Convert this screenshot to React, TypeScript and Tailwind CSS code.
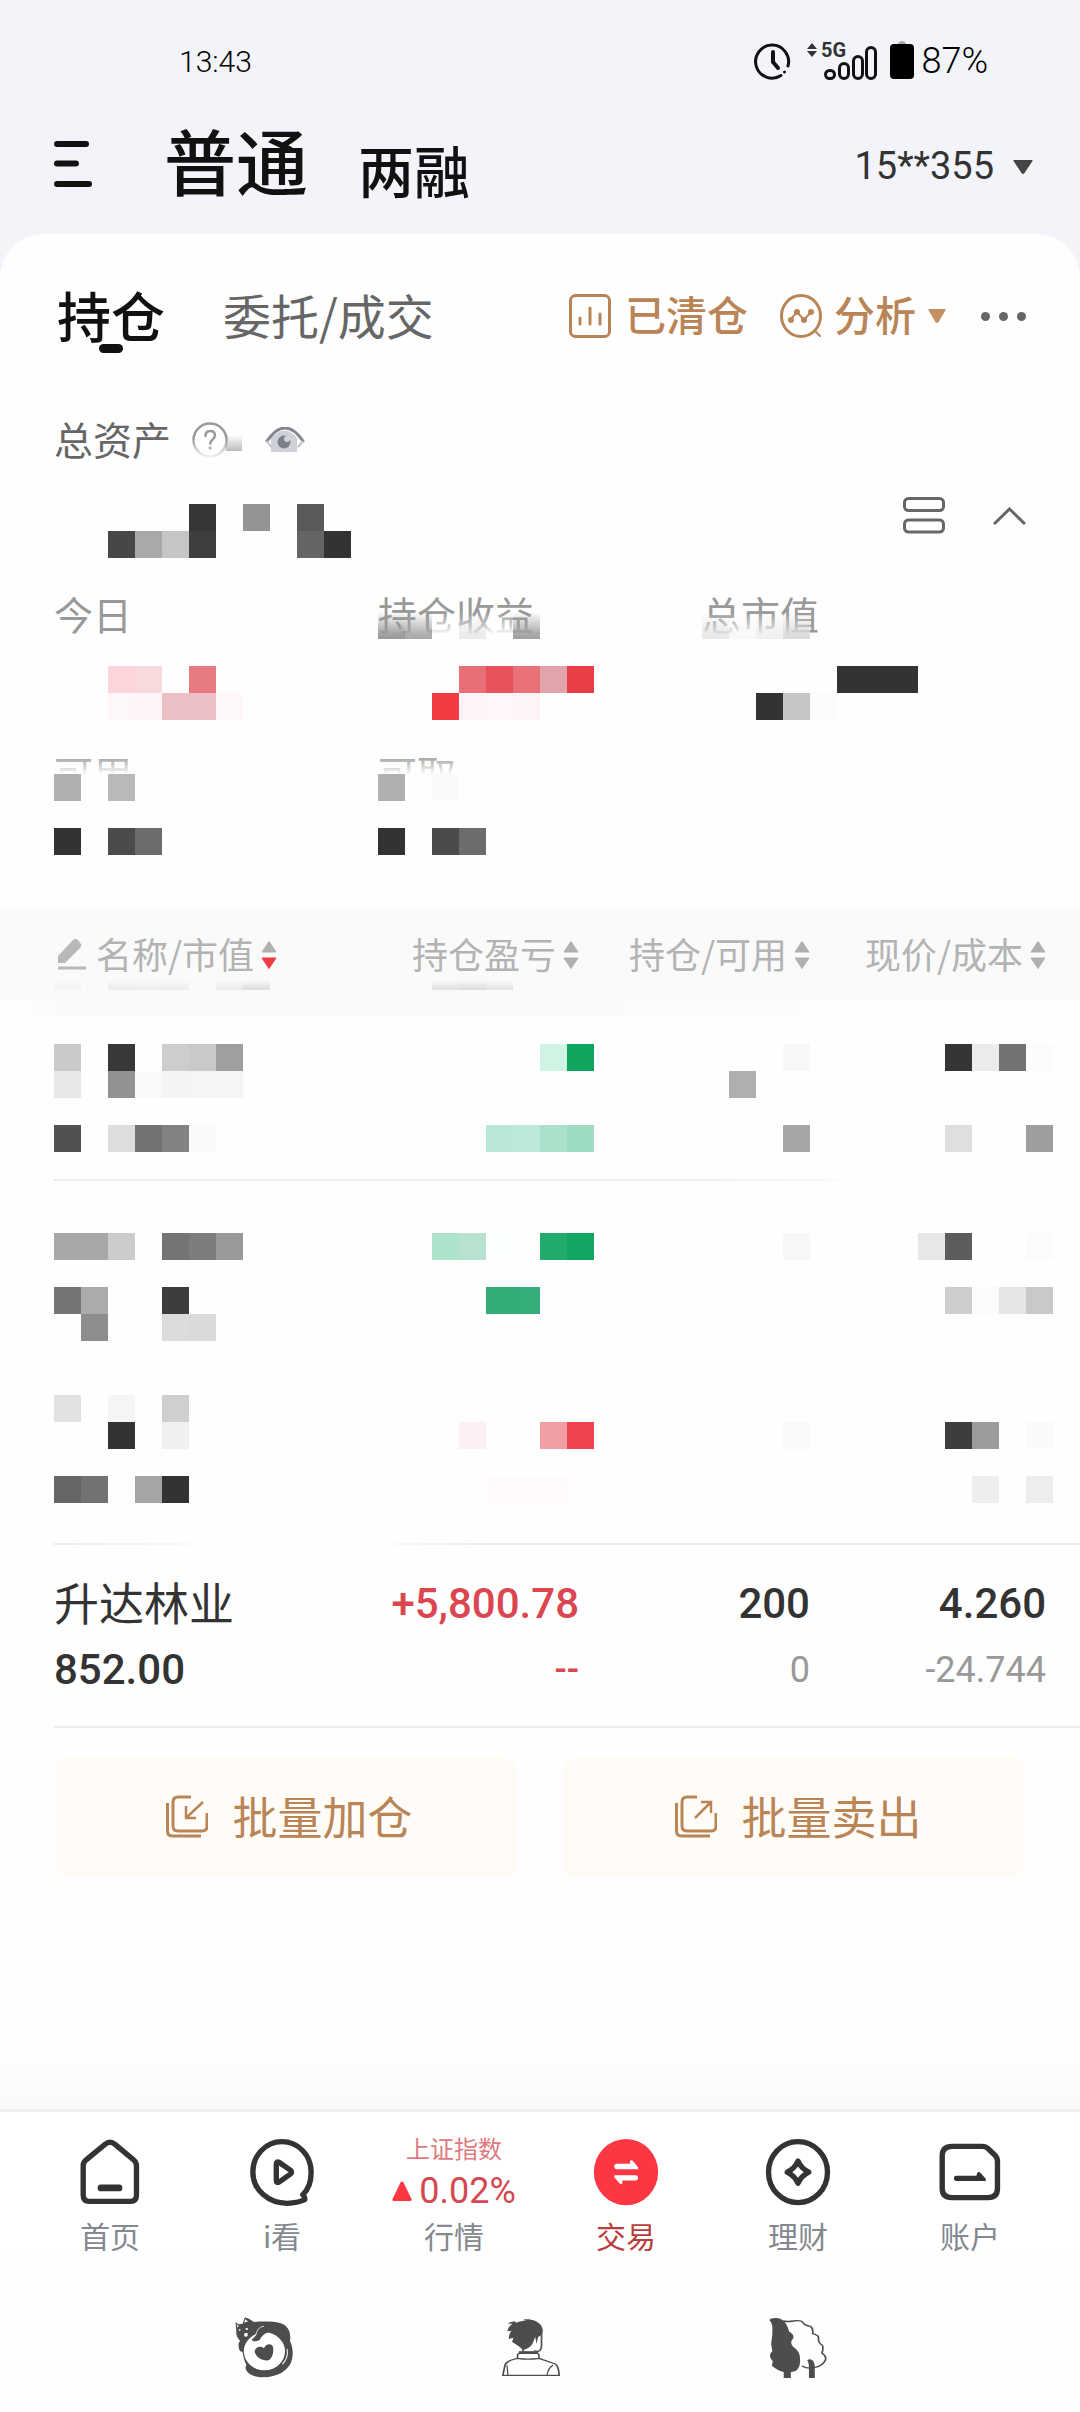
import type { ReactNode } from "react";

const CELL = 27;

type MosaicProps = { rows: string[]; cols: number; className?: string };

// Privacy mosaic: every row is a list of hex colours, "-" leaves a cell empty
function Mosaic({ rows, cols, className = "" }: MosaicProps) {
  const width = cols * CELL;
  const height = rows.length * CELL;

  return (
    <svg
      width={width}
      height={height}
      viewBox={`0 0 ${width} ${height}`}
      shapeRendering="crispEdges"
      aria-hidden="true"
      className={`block shrink-0 ${className}`}
    >
      {rows.map((row, y) =>
        row.split(" ").map((color, x) =>
          color === "-" || color === "" ? null : (
            <rect key={`${x}-${y}`} x={x * CELL} y={y * CELL} width={CELL} height={CELL} fill={`#${color}`} />
          )
        )
      )}
    </svg>
  );
}

type SmudgeProps = { id: string; colors: string; height: number; className?: string };

// Strip of mosaic that fades in from the top
function Smudge({ id, colors, height, className = "" }: SmudgeProps) {
  const list = colors.split(" ");
  const width = list.length * CELL;

  return (
    <svg width={width} height={height} viewBox={`0 0 ${width} ${height}`} aria-hidden="true" className={`absolute ${className}`}>
      <defs>
        <linearGradient id={id} x1="0" y1="0" x2="0" y2="1">
          <stop offset="0" stopColor="#fff" stopOpacity="0" />
          <stop offset="0.8" stopColor="#fff" stopOpacity="0.9" />
          <stop offset="1" stopColor="#fff" />
        </linearGradient>
        <mask id={`${id}-mask`}>
          <rect width={width} height={height} fill={`url(#${id})`} />
        </mask>
      </defs>
      <g mask={`url(#${id}-mask)`}>
        {list.map((color, x) => (
          <rect key={x} x={x * CELL} width={CELL} height={height} fill={color === "-" ? "#ffffff" : `#${color}`} />
        ))}
      </g>
    </svg>
  );
}

function SortIcon({ active = false }: { active?: boolean }) {
  return (
    <svg width="16" height="30" viewBox="0 0 16 30" aria-hidden="true">
      <path d="M8 1.5 15 12H1z" fill="#b0b0b0" stroke="#b0b0b0" strokeLinejoin="round" />
      <path d="M8 28.5 15 18H1z" fill={active ? "#ee3b45" : "#b0b0b0"} stroke={active ? "#ee3b45" : "#b0b0b0"} strokeLinejoin="round" />
    </svg>
  );
}

function StatusBar() {
  return (
    <div className="flex h-[100px] items-center justify-between pt-[22px] pr-[92px] pl-[179px] font-[Roboto] font-light text-black">
      <span className="text-[30px]">13:43</span>

      <div className="flex items-center">
        <svg width="160" height="40" viewBox="0 0 160 40" fill="none" aria-hidden="true" className="overflow-visible">
          <path d="M27 34.5A16.5 16.5 0 1 1 34 25" stroke="#111" strokeWidth="3" strokeLinecap="round" />
          <circle cx="30.500" cy="31" r="1.500" fill="#111" />
          <path d="M19 11v10l5 6" stroke="#111" strokeWidth="4" strokeLinecap="round" strokeLinejoin="round" />
          <path d="M58 2l5 6H53zM58 16l5-6H53z" fill="#333" />
          <text x="67" y="16" fontSize="20" fontWeight="700" fontFamily="Roboto, sans-serif" fill="#333">
            5G
          </text>
          <g stroke="#111" strokeWidth="3">
            <rect x="71.500" y="29.500" width="9" height="8" rx="4" />
            <rect x="85.500" y="22.500" width="9" height="15" rx="4.500" />
            <rect x="99.500" y="15.500" width="9" height="22" rx="4.500" />
            <rect x="112.500" y="6.500" width="9" height="31" rx="4.500" />
          </g>
          <path d="M144 4q0-4 4-4t4 4z" fill="#aaa" />
          <rect x="136" y="3" width="24" height="35" rx="4" fill="#000" />
        </svg>
        <span className="ml-[7px] text-[36px]">87%</span>
      </div>
    </div>
  );
}

function TitleBar() {
  return (
    <div className="flex h-[128px] items-center pr-[47px] pl-[54px] text-[#111]">
      <button type="button" aria-label="菜单">
        <svg width="40" height="46" viewBox="0 0 40 46" fill="none" stroke="#111" strokeWidth="6" strokeLinecap="round" aria-hidden="true">
          <path d="M3 3h29M3 22.500h19M3 43h32" />
        </svg>
      </button>

      <nav className="ml-[70px] flex items-end gap-[50px] pb-[10px] font-medium">
        <button type="button" className="text-[72px] leading-[72px]">
          普通
        </button>
        <button type="button" className="text-[56px] leading-[52px]">
          两融
        </button>
      </nav>

      <button type="button" className="ml-auto flex items-center gap-[19px] pt-[5px] font-[Roboto] text-[38px] text-[#333]">
        15**355
        <svg width="20" height="14" viewBox="0 0 20 14" fill="#444" aria-hidden="true">
          <path d="M1 0h18q1 0 .5 1l-8 12q-1.500 2-3 0L.5 1Q0 0 1 0z" />
        </svg>
      </button>
    </div>
  );
}

function PositionTabs() {
  return (
    <div className="flex h-[92px] items-center pr-[54px] pl-[57px]">
      <button type="button" className="relative pb-1 text-[54px] font-medium text-[#111]">
        持仓
        <span className="absolute bottom-[6px] left-1/2 h-[9px] w-6 -translate-x-1/2 rounded-full bg-[#111]" />
      </button>
      <button type="button" className="ml-[58px] pb-1 text-[48px] text-[#666]">
        委托/成交
      </button>

      <div className="ml-auto flex items-center text-[41px] font-medium text-[#b98556]">
        <button type="button" className="flex items-center gap-[14px]">
          <svg width="42" height="44" viewBox="0 0 42 44" fill="none" stroke="currentColor" strokeWidth="3" strokeLinecap="round" aria-hidden="true">
            <rect x="1.500" y="1.500" width="39" height="41" rx="5" />
            <path d="M11 24v6M21 14v16M31 20v10" />
          </svg>
          <span className="pb-1">已清仓</span>
        </button>
        <button type="button" className="ml-[32px] flex items-center gap-[12px]">
          <svg width="42" height="44" viewBox="0 0 42 44" fill="none" stroke="currentColor" strokeWidth="3" strokeLinecap="round" aria-hidden="true">
            <ellipse cx="21" cy="22" rx="19.500" ry="20.500" />
            <path d="M35 37l5 5M10 26l7-8 7 8 7-8" strokeWidth="2" />
            <g fill="currentColor" stroke="none">
              <circle cx="11" cy="26" r="3" />
              <circle cx="17" cy="18" r="3" />
              <circle cx="24" cy="26" r="3" />
              <circle cx="31" cy="18" r="3" />
            </g>
          </svg>
          <span className="pb-1">分析</span>
          <svg width="18" height="14" viewBox="0 0 18 14" fill="#c69060" aria-hidden="true">
            <path d="M1 0h16q1 0 .6 1l-7 12q-1.600 2-3.200 0l-7-12Q0 0 1 0z" />
          </svg>
        </button>
        <button type="button" aria-label="更多" className="ml-[35px] flex gap-[9px]">
          <span className="size-[9px] rounded-full bg-[#666]" />
          <span className="size-[9px] rounded-full bg-[#666]" />
          <span className="size-[9px] rounded-full bg-[#666]" />
        </button>
      </div>
    </div>
  );
}

function AssetTotal() {
  return (
    <section className="px-[54px]">
      <div className="flex h-[44px] items-center">
        <h2 className="pb-1 text-[39px] text-[#666]">总资产</h2>
        <button type="button" aria-label="说明" className="ml-[21px]">
          <svg width="52" height="38" viewBox="0 0 52 38" fill="none" aria-hidden="true">
            <defs>
              <linearGradient id="help-fade" x1="0" y1="0" x2="0" y2="1">
                <stop offset="0" stopColor="#bbb" stopOpacity="0" />
                <stop offset="1" stopColor="#bbb" />
              </linearGradient>
              <linearGradient id="help-ring" x1="0" y1="0" x2="0" y2="1">
                <stop offset="0.4" stopColor="#999" />
                <stop offset="1" stopColor="#999" stopOpacity="0.15" />
              </linearGradient>
            </defs>
            <rect x="34" y="14" width="16" height="16" fill="url(#help-fade)" />
            <circle cx="18" cy="19" r="16.500" fill="#fff" stroke="url(#help-ring)" strokeWidth="2.500" />
            <path d="M13.500 15q0-5 4.700-5t4.700 4.600c0 4-4.700 4-4.700 8" stroke="#999" strokeWidth="2.500" strokeLinecap="round" />
            <circle cx="18.200" cy="27" r="1.800" fill="#bbb" />
          </svg>
        </button>
        <button type="button" aria-label="隐藏金额" className="ml-[21px]">
          <svg width="40" height="26" viewBox="0 0 40 26" fill="none" aria-hidden="true">
            <path d="M6 11Q20-4 32 11v14H6z" fill="#cfd1d6" />
            <path d="M2 14Q20-12 38 14" stroke="#85878f" strokeWidth="3" strokeLinecap="round" />
            <path d="M2 14l4 6M38 14l-5 6" stroke="#c3c5ca" strokeWidth="2" />
            <circle cx="19" cy="15" r="6.500" fill="#7d808a" />
            <circle cx="22" cy="12" r="3" fill="#d3d5da" />
          </svg>
        </button>
      </div>

      <div className="mt-[35px] flex h-[61px] items-start">
        <Mosaic
          cols={11}
          rows={[
            "- - - - - 363636 - 949494 - 5a5a5a",
            "- - 474747 a9a9a9 c5c5c5 3e3e3e - - - 656565 333333",
          ]}
          className="self-end"
        />
        <div className="ml-auto flex items-center gap-[48px]">
          <button type="button" aria-label="切换视图">
            <svg width="42" height="37" viewBox="0 0 42 37" fill="none" stroke="#666" strokeWidth="3" aria-hidden="true">
              <rect x="1.500" y="1.500" width="39" height="12" rx="4" />
              <rect x="1.500" y="23" width="39" height="12" rx="4" />
            </svg>
          </button>
          <button type="button" aria-label="收起">
            <svg width="33" height="18" viewBox="0 0 33 18" fill="none" stroke="#666" strokeWidth="3" aria-hidden="true">
              <path d="M1 17 16.500 2 32 17" />
            </svg>
          </button>
        </div>
      </div>
    </section>
  );
}

const assetStats = [
  {
    label: "今日",
    smudge: "",
    rows: ["- - fbd5da f9dadc - e87b82", "- - fef7f7 fef4f5 ebbfc3 ebbfc3 fef8f8"],
  },
  {
    label: "持仓收益",
    smudge: "999999 a8a8a8 - eaeaea - a2a2a2",
    rows: ["- - - e86f75 e8525a e87178 e0a4aa eb3d45", "- - f23a42 fff4f5 fff7f7 fff4f5"],
  },
  {
    label: "总市值",
    smudge: "e8e8e8 f8f8f8 efefef dadada",
    rows: ["- - - - - 333333 333333 333333", "- - 333333 c6c6c6 fcfcfc"],
  },
];

const cashStats = [
  { label: "可用", rows: ["b0b0b0 - b9b9b9", "-", "333333 - 4b4b4b 6c6c6c"] },
  { label: "可取", rows: ["b0b0b0 - fafafa", "-", "333333 - 4b4b4b 6c6c6c"] },
];

function AssetStats() {
  return (
    <section className="px-[54px] pt-[34px] pb-[54px] text-[39px] leading-[43px] text-[#999]">
      <dl className="grid grid-cols-3">
        {assetStats.map((item, i) => (
          <div key={item.label}>
            <dt className="relative pb-1">
              {item.label}
              {item.smudge && <Smudge id={`stat-${i}`} colors={item.smudge} height={27} className="bottom-0 left-0" />}
            </dt>
            <dd className="mt-[27px]">
              <Mosaic cols={9} rows={item.rows} />
            </dd>
          </div>
        ))}
      </dl>

      <dl className="mt-[31px] grid grid-cols-3">
        {cashStats.map((item) => (
          <div key={item.label}>
            <dt className="relative h-[23px]">
              {item.label}
              <span className="absolute inset-x-0 top-0 h-[46px] bg-[linear-gradient(to_bottom,transparent_4px,#fefefe_24px)]" />
            </dt>
            <dd className="relative">
              <Mosaic cols={4} rows={item.rows} />
            </dd>
          </div>
        ))}
      </dl>
    </section>
  );
}

type MaskedRow = { id: string; rowClass: string; name: string[]; profit: string[]; amount: string[]; price: string[] };

const maskedRows: MaskedRow[] = [
  {
    id: "a",
    rowClass: "h-[182px] bg-[linear-gradient(to_right,#ececec_60%,transparent_80%)] bg-[length:100%_2px] bg-bottom bg-no-repeat [&>td]:pt-[45px]",
    name: [
      "cacaca - 383838 - cdcdcd c9c9c9 9f9f9f",
      "e8e8e8 - 929292 fafafa f4f4f4 f5f5f5 f5f5f5",
      "-",
      "515151 - dedede 737373 828282 fafafa",
    ],
    profit: ["- - - - - - - cff4e3 0fa55f", "-", "-", "- - - - - b8e8d5 bceada abe1ca 9ddcc1"],
    amount: ["- - - - - - - f8f8f8", "- - - - - afafaf", "-", "- - - - - - - a6a6a6"],
    price: ["- - - - - 343434 ebebeb 737373 fbfbfb", "-", "-", "- - - - - dfdfdf - - 9e9e9e"],
  },
  {
    id: "b",
    rowClass: "h-[182px] [&>td]:pt-[52px]",
    name: [
      "a8a8a8 a8a8a8 cccccc - 747474 7d7d7d 999999",
      "-",
      "757575 ababab - - 3d3d3d",
      "- 8d8d8d - - dcdcdc dadada",
    ],
    profit: ["- - - ade3cb b8e2d0 fafffd - 22ab6c 13a662", "-", "- - - - - 31ad76 33ae78", "-"],
    amount: ["- - - - - - - f7f7f7", "-", "-", "-"],
    price: ["- - - - e7e7e7 5c5c5c - - fbfbfb", "-", "- - - - - cdcdcd fbfbfb e5e5e5 c9c9c9", "-"],
  },
  {
    id: "c",
    rowClass:
      "h-[182px] bg-[linear-gradient(to_right,#ececec,transparent_18%,transparent_30%,#ececec_42%)] bg-[length:100%_2px] bg-bottom bg-no-repeat [&>td]:pt-[32px]",
    name: ["e2e2e2 - f5f5f5 - cfcfcf", "- - 333333 - f0f0f0", "-", "666666 727272 - a5a5a5 333333"],
    profit: ["-", "- - - - fdf0f2 - - f19fa5 ef444d", "-", "- - - - - fffbfb fffbfb fffbfb fffdfd"],
    amount: ["-", "- - - - - - - f9f9f9", "-", "-"],
    price: ["-", "- - - - - 3d3d3d 9c9c9c - fafafa", "-", "- - - - - - eeeeee - ededed"],
  },
];

function HeadCell({ children, active, className = "" }: { children: ReactNode; active?: boolean; className?: string }) {
  return (
    <th className={`p-0 pb-[3px] font-normal ${className}`}>
      <button type="button" className="inline-flex items-center gap-[7px] align-middle">
        {children}
        <SortIcon active={active} />
      </button>
    </th>
  );
}

function Holdings() {
  return (
    <div className="relative bg-[linear-gradient(#fafafa,#fafafa)] bg-[length:100%_90px] bg-no-repeat pl-[54px]">
      <table className="w-full table-fixed border-collapse text-right">
        <colgroup>
          <col />
          <col className="w-[243px]" />
          <col className="w-[216px]" />
          <col className="w-[270px]" />
        </colgroup>
        <thead className="text-[36px] leading-[44px] text-[#b3b3b3]">
          <tr className="h-[90px]">
            <HeadCell active className="text-left">
              <svg width="35" height="34" viewBox="0 0 35 34" aria-hidden="true">
                <path d="M4 25V18L19 2q3-2 5 0l3 4q1 2-1 4L11 25z" fill="#b8b8b8" />
                <path d="M4 30h28" stroke="#b8b8b8" strokeWidth="3" />
              </svg>
              <span className="pb-[3px]">名称/市值</span>
            </HeadCell>
            <HeadCell className="pr-[15px]">
              <span className="pb-[3px]">持仓盈亏</span>
            </HeadCell>
            <HeadCell>
              <span className="pb-[3px]">持仓/可用</span>
            </HeadCell>
            <HeadCell className="pr-[34px]">
              <span className="pb-[3px]">现价/成本</span>
            </HeadCell>
          </tr>
        </thead>
        <tbody>
          {maskedRows.map((row) => (
            <tr key={row.id} className={`align-top ${row.rowClass}`}>
              <td>
                <Mosaic cols={8} rows={row.name} />
              </td>
              <td>
                <Mosaic cols={9} rows={row.profit} />
              </td>
              <td>
                <Mosaic cols={8} rows={row.amount} />
              </td>
              <td>
                <Mosaic cols={9} rows={row.price} />
              </td>
            </tr>
          ))}
          <tr className="h-[182px] border-b-2 border-[#ececec] align-top font-[Roboto] text-[42px] leading-[66px] text-[#333] [&>td]:pt-[26px]">
            <td className="text-left">
              <p className="font-['Noto_Sans_CJK_SC'] text-[45px] leading-[62px]">升达林业</p>
              <p className="pt-1 font-medium">852.00</p>
            </td>
            <td className="pr-[15px] font-medium text-[#dc4650]">
              <p>+5,800.78</p>
              <p className="text-[36px]">--</p>
            </td>
            <td>
              <p className="font-medium">200</p>
              <p className="text-[36px] text-[#999]">0</p>
            </td>
            <td className="pr-[34px]">
              <p className="font-medium">4.260</p>
              <p className="text-[36px] text-[#999]">-24.744</p>
            </td>
          </tr>
        </tbody>
      </table>
      <div className="absolute top-[90px] left-[24px] h-[17px] w-[860px] bg-[linear-gradient(to_right,transparent,#fafafa_5%,#fafafa_60%,transparent)]" />
      <Smudge id="head-name" colors="f3f3f3 fafafa ececec eeeeee ececec fafafa ebebeb dddddd" height={10} className="top-[71px] left-[54px]" />
      <Smudge id="head-profit" colors="e2e2e2 dddddd e3e3e3" height={10} className="top-[71px] left-[432px]" />
    </div>
  );
}

function BatchActions() {
  return (
    <div className="grid grid-cols-2 gap-[46px] px-[54px] pt-[29px] text-[45px] text-[#b98556]">
      <button type="button" className="flex h-[120px] items-center justify-center gap-[24px] rounded-xl bg-[#fffcf8]">
        <svg width="50" height="44" viewBox="-2 0 50 44" fill="none" stroke="currentColor" strokeWidth="3" aria-hidden="true">
          <path d="M31 2H18q-5 0-5 5v24q0 5 5 5h24q5 0 5-5V18" />
          <path d="M7.500 8v28q0 5 5 5H41" />
          <path d="M43 7 26 23M26 11v12h10" strokeWidth="2.500" />
        </svg>
        <span className="pb-[3px]">批量加仓</span>
      </button>
      <button type="button" className="flex h-[120px] items-center justify-center gap-[24px] rounded-xl bg-[#fffcf8]">
        <svg width="50" height="44" viewBox="-2 0 50 44" fill="none" stroke="currentColor" strokeWidth="3" aria-hidden="true">
          <path d="M28 2H18q-5 0-5 5v24q0 5 5 5h24q5 0 5-5V18" />
          <path d="M7.500 8v28q0 5 5 5H41" />
          <path d="M26 23 42 7M32 7h10v11" strokeWidth="2.500" />
        </svg>
        <span className="pb-[3px]">批量卖出</span>
      </button>
    </div>
  );
}

function TabItem({ label, active, children }: { label: string; active?: boolean; children: ReactNode }) {
  return (
    <a href="#" className="flex flex-col items-center">
      <div className="flex h-[81px] flex-col items-center">{children}</div>
      <span className={`text-[30px] leading-[36px] ${active ? "text-[#b8403c]" : "text-[#84888f]"}`}>{label}</span>
    </a>
  );
}

function BottomTabs() {
  return (
    <nav className="grid grid-cols-6 border-t-[3px] border-[#f0f0f0] bg-white px-[24px] pt-[24px]">
      <TabItem label="首页">
        <svg width="68" height="67" viewBox="221 147 198 200" fill="none" stroke="#333" strokeWidth="16" strokeLinecap="round" aria-hidden="true" className="mt-[3px]">
          <path d="M240 227v88q0 18 18 18h123q18 0 18-18v-88q0-10-8-17l-56-47q-15-12-30 0l-57 47q-8 7-8 17z" />
          <path d="M293 293h54" strokeWidth="20" />
        </svg>
      </TabItem>
      <TabItem label="i看">
        <svg width="68" height="67" viewBox="720 147 198 200" fill="none" stroke="#333" strokeWidth="16" strokeLinejoin="round" aria-hidden="true" className="mt-[3px]">
          <path d="M881 313C898 297 906 272 906 246C906 195 867 155 819 155C771 155 732 195 732 246C732 300 780 339 835 339Q865 338 887 328Q888 320 881 313Z" />
          <path d="M802 222q0-10 9-5l33 23q7 6 0 12l-33 23q-9 5-9-5z" />
        </svg>
      </TabItem>
      <TabItem label="行情">
        <span className="text-[24px] leading-[24px] text-[#de7a80]">上证指数</span>
        <span className="mt-[3px] flex items-center gap-[7px] font-[Roboto] text-[36px] leading-[56px] text-[#d54850]">
          <svg width="20" height="20" viewBox="0 0 20 20" fill="#fb3744" aria-hidden="true">
            <path d="M8.500 1.500q1.500-2 3 0l8 16.500q.5 2-1.500 2H2q-2 0-1.500-2z" />
          </svg>
          0.02%
        </span>
      </TabItem>
      <TabItem label="交易" active>
        <svg width="68" height="67" viewBox="151 147 198 200" aria-hidden="true" className="mt-[3px]">
          <ellipse cx="250" cy="246" rx="96" ry="99" fill="#fb3744" />
          <path id="trade-arrow" d="M223 221h39v-8q4-5 8-1l16 19v6h-63q-8 0-8-8t8-8z" fill="#fff" />
          <use href="#trade-arrow" transform="rotate(180 250.500 246)" />
        </svg>
      </TabItem>
      <TabItem label="理财">
        <svg width="68" height="67" viewBox="650 147 198 200" fill="none" stroke="#333" strokeWidth="16" strokeLinejoin="round" aria-hidden="true" className="mt-[3px]">
          <ellipse cx="749" cy="246" rx="88" ry="91" />
          <path d="M749 213Q758 235 781 246Q758 258 749 279Q740 258 717 246Q740 235 749 213Z" />
        </svg>
      </TabItem>
      <TabItem label="账户">
        <svg width="68" height="67" viewBox="1150 147 198 200" aria-hidden="true" className="mt-[3px]">
          <path
            d="M1196 169h89q10 0 16 5l21 20q9 8 9 20v80q0 28-28 28h-108q-29 0-29-28v-96q0-29 30-29z"
            fill="none"
            stroke="#333"
            strokeWidth="16"
          />
          <path d="M1209 257h59l3-9q4-5 9 0l16 18v6h-87q-8 0-8-8t8-7z" fill="#333" />
        </svg>
      </TabItem>
    </nav>
  );
}

function SystemNav() {
  return (
    <div className="grid grid-cols-3 justify-items-center pt-[64px] pr-[148px] pb-[34px] pl-[130px]">
      <button type="button" aria-label="最近任务">
        <svg width="58" height="61" viewBox="83 77 138 183" preserveAspectRatio="none" fill="#4d4d4d" aria-hidden="true">
          <path d="M84 93l8 6 9-2 5-18q2-2 11 4l11 9c22-2 47-2 62 3 22 8 26 30 24 55 8 20 8 45 2 65-11 25-31 42-66 43-25-1-42-13-42-30l2-8c-4-10-8-25-9-38-7 0-11-12-9-27l3-7c-7-8-10-18-9-33z" />
          <ellipse cx="153" cy="180" rx="49" ry="57" fill="#fff" />
          <path d="M150 106c-10 4-15 24-27 39 2 8 12 5 19 0 4-10 10-18 20-22l6-17z" />
          <path d="M152 105c-12 1-17 13-19 24-3 9-8 11-11 14" fill="none" stroke="#fff" strokeWidth="2" />
          <path d="M207 173q4 24-11 46" fill="none" stroke="#fff" strokeWidth="2.500" />
          <path d="M152 171c4-16 20-16 22-2 1 18-3 31-11 38-15 2-28-7-33-24-1-15 14-22 22-12z" />
          <g fill="#fff">
            <circle cx="94" cy="116" r="2.500" />
            <circle cx="111" cy="113" r="3" />
            <path d="M87 99l5 4-3 6zM107 84l7 6-9 4zM105 126l8-1v9q-6 5-8-1z" />
          </g>
        </svg>
      </button>
      <button type="button" aria-label="主页">
        <svg width="58" height="61" viewBox="720 77 138 183" preserveAspectRatio="none" fill="none" stroke="#4d4d4d" strokeWidth="4" aria-hidden="true">
          <path
            d="M753 91c-8-2-15 2-19 6l11 0c-7 6-11 14-12 23l9-2c-4 8-6 18-6 25l11-4-3 13c11 8 20 16 26 24 10-3 20-10 23-20l6-19 3 20 4-20c8-4 11-10 11-17 1-18-12-32-28-35-9-2-17-1-19 2l9 2c-9-1-18 0-26 6z"
            fill="#4d4d4d"
            stroke="none"
          />
          <path d="M814 125v36q0 18-9 19l-9-1M770 172v12" />
          <path d="M760 183h46" strokeWidth="7" />
          <path d="M757 201v-9q0-6 6-6h39q6 0 6 6v9q-26 5-51 0c-19 5-28 11-30 21l-5 30h134c-1-22-4-30-9-34l-39-17" />
          <path d="M732 222l2 29M827 251c2-15 8-25 15-30" strokeWidth="3" />
        </svg>
      </button>
      <button type="button" aria-label="返回">
        <svg width="58" height="61" viewBox="1352 78 138 183" preserveAspectRatio="none" fill="#4d4d4d" aria-hidden="true">
          <path d="M1353 88c1-8 19-9 27-4 12 8 16 21 20 38 10 6 13 16 8 23-5 7-4 15 2 23 12 10 17 22 16 44-1 20-8 30-22 31v18h-17v-18c-12-3-20-11-28-18l2-15c-8-10-9-20-1-30l-3-20 3-30c0-20 2-30-7-42z" />
          <path
            d="M1386 90q10 3 24 0 18-4 22 4 5 9 18 12 8 6 6 22 14 5 14 12-2 15 9 23 3 9-1 23 12 11 8 22-6 17-24 21-17 6-32-4"
            fill="none"
            stroke="#4d4d4d"
            strokeWidth="4"
          />
          <path d="M1443 207q8-6 14 2 4 8 4 20v32h-14v-35q0-10-4-19z" />
        </svg>
      </button>
    </div>
  );
}

export default function App() {
  return (
    <div className="flex min-h-screen flex-col bg-[#f3f4f9] font-['Noto_Sans_CJK_SC',sans-serif]">
      <header>
        <StatusBar />
        <TitleBar />
      </header>

      <main className="mt-[6px] flex grow flex-col rounded-t-[44px] bg-[#fefefe] pt-[36px]">
        <PositionTabs />
        <div className="mt-[56px]">
          <AssetTotal />
        </div>
        <AssetStats />
        <Holdings />
        <BatchActions />
        <div className="mt-auto h-[60px] bg-linear-to-b from-transparent to-[#fafafa]" />
      </main>

      <footer className="bg-[#fefefe]">
        <BottomTabs />
        <SystemNav />
      </footer>
    </div>
  );
}
